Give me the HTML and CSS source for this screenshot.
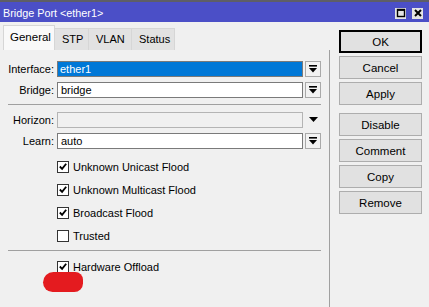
FILE: index.html
```html
<!DOCTYPE html>
<html lang="en">
<head>
    <meta charset="UTF-8">
    <title>Bridge Port &lt;ether1&gt;</title>
    <link rel="stylesheet" href="styles.css">
</head>
<body>
    <div class="window">
        <div class="titlebar">
            <span class="title">Bridge Port &lt;ether1&gt;</span>
            <div class="title-btns">
                <span class="tbtn">
                    <svg width="10" height="10" viewBox="0 0 10 10"><rect x="1.5" y="1.5" width="7" height="7" fill="none" stroke="#000" stroke-width="1.4"/><line x1="1.5" y1="2.2" x2="8.5" y2="2.2" stroke="#000" stroke-width="1.4"/></svg>
                </span>
                <span class="tbtn">
                    <svg width="10" height="10" viewBox="0 0 10 10"><path d="M2 2 L8 8 M8 2 L2 8" stroke="#000" stroke-width="2"/></svg>
                </span>
            </div>
        </div>

        <div class="main">
            <div class="left">
                <div class="tabs">
                    <div class="tab active">General</div>
                    <div class="tab">STP</div>
                    <div class="tab">VLAN</div>
                    <div class="tab">Status</div>
                </div>

                <div class="pane">
                    <div class="row">
                        <label>Interface:</label>
                        <div class="field selected"><span>ether1</span></div>
                        <span class="drop"><svg width="8" height="8" viewBox="0 0 8 8"><rect x="0" y="0" width="8" height="1.6" fill="#000"/><polygon points="0,3 8,3 4,7.5" fill="#000"/></svg></span>
                    </div>
                    <div class="row">
                        <label>Bridge:</label>
                        <div class="field">bridge</div>
                        <span class="drop"><svg width="8" height="8" viewBox="0 0 8 8"><rect x="0" y="0" width="8" height="1.6" fill="#000"/><polygon points="0,3 8,3 4,7.5" fill="#000"/></svg></span>
                    </div>

                    <div class="sep first"></div>

                    <div class="row">
                        <label>Horizon:</label>
                        <div class="field disabled"></div>
                        <span class="arrow"><svg width="9" height="6" viewBox="0 0 9 6"><polygon points="0,0 9,0 4.5,5" fill="#000"/></svg></span>
                    </div>
                    <div class="row">
                        <label>Learn:</label>
                        <div class="field">auto</div>
                        <span class="drop"><svg width="8" height="8" viewBox="0 0 8 8"><rect x="0" y="0" width="8" height="1.6" fill="#000"/><polygon points="0,3 8,3 4,7.5" fill="#000"/></svg></span>
                    </div>

                    <div class="checks">
                        <div class="check"><span class="box on"><svg width="11" height="11" viewBox="0 0 11 11"><path d="M2 5.5 L4.5 8 L9 2.5" fill="none" stroke="#000" stroke-width="2"/></svg></span>Unknown Unicast Flood</div>
                        <div class="check"><span class="box on"><svg width="11" height="11" viewBox="0 0 11 11"><path d="M2 5.5 L4.5 8 L9 2.5" fill="none" stroke="#000" stroke-width="2"/></svg></span>Unknown Multicast Flood</div>
                        <div class="check"><span class="box on"><svg width="11" height="11" viewBox="0 0 11 11"><path d="M2 5.5 L4.5 8 L9 2.5" fill="none" stroke="#000" stroke-width="2"/></svg></span>Broadcast Flood</div>
                        <div class="check"><span class="box"></span>Trusted</div>
                    </div>

                    <div class="sep second"></div>

                    <div class="checks">
                        <div class="check"><span class="box on"><svg width="11" height="11" viewBox="0 0 11 11"><path d="M2 5.5 L4.5 8 L9 2.5" fill="none" stroke="#000" stroke-width="2"/></svg></span>Hardware Offload</div>
                    </div>
                </div>
            </div>

            <div class="actions">
                <button class="btn default">OK</button>
                <button class="btn">Cancel</button>
                <button class="btn">Apply</button>
                <button class="btn group">Disable</button>
                <button class="btn">Comment</button>
                <button class="btn">Copy</button>
                <button class="btn">Remove</button>
            </div>
        </div>

        <div class="scribble"></div>
    </div>
</body>
</html>
```

FILE: styles.css
```css
:root {
    --title-blue: #4b4fc7;
    --window-bg: #f0f0f0;
    --border: #a0a0a0;
    --button-bg: #e1e1e1;
    --button-border: #adadad;
}

body {
    margin: 0;
    padding: 0;
    font-family: "Liberation Sans", Arial, sans-serif;
    font-size: 11px;
    color: #000;
    background-color: var(--window-bg);
}

.window {
    position: relative;
    height: 307px;
    overflow: hidden;
}

.titlebar {
    display: flex;
    align-items: center;
    justify-content: space-between;
    height: 20px;
    border-top: 2px solid #5e5e66;
    background-color: var(--title-blue);
    color: #fff;
    padding: 0 6px 0 3px;
}

.title {
    font-size: 10.8px;
    padding-top: 1px;
}

.title-btns {
    display: flex;
    gap: 6px;
    padding-top: 2px;
}

.tbtn {
    display: flex;
    align-items: center;
    justify-content: center;
    width: 11px;
    height: 11px;
    background-color: #e4e4e4;
}

.main {
    display: flex;
    height: 285px;
}

.left {
    display: flex;
    flex-direction: column;
    width: 330px;
}

.tabs {
    display: flex;
    align-items: flex-end;
    height: 28px;
    padding-left: 3px;
}

.tab {
    box-sizing: border-box;
    height: 22px;
    line-height: 21px;
    padding: 0 7px;
    background-color: #e2e2e2;
    border: 1px solid #d6d6d6;
    border-bottom: none;
    margin-left: -1px;
}

.tab:first-child {
    margin-left: 0;
}

.tab.active {
    height: 25px;
    line-height: 23px;
    width: 52px;
    padding: 0 0 0 6px;
    background-color: #f9f9f9;
    font-size: 11.5px;
}

.tab:nth-child(2) { width: 35px; }
.tab:nth-child(3) { width: 44px; }
.tab:nth-child(4) { width: 44px; }

.pane {
    flex: 1;
    padding: 11px 8px 0 8px;
    border-right: 1px solid var(--border);
}

.row {
    display: flex;
    align-items: center;
    height: 16px;
    margin-bottom: 5px;
}

.row + .row {
    margin-bottom: 6px;
}

.row label {
    width: 46px;
    text-align: right;
    margin-right: 3px;
    white-space: nowrap;
}

.field {
    box-sizing: border-box;
    flex: 1;
    height: 16px;
    line-height: 14px;
    padding: 0 3px;
    background-color: #fff;
    border: 1px solid #7a7a7a;
}

.field.selected {
    padding: 0 2px;
    background-color: #0078d7;
    color: #fff;
}

.field.disabled {
    background-color: #f0f0f0;
    border-color: #b4b4b4;
}

.drop {
    box-sizing: border-box;
    display: flex;
    align-items: center;
    justify-content: center;
    width: 16px;
    height: 16px;
    margin-left: 2px;
    background-color: #f2f2f2;
    border: 1px solid #a9a9a9;
}

.arrow {
    display: flex;
    align-items: center;
    justify-content: center;
    width: 16px;
    height: 16px;
    margin-left: 2px;
}

.sep {
    height: 1px;
    background-color: var(--border);
}

.sep.first {
    margin: 2px 0 7px 0;
}

.sep.second {
    margin: 3px 0 4px 0;
}

.checks {
    padding-left: 49px;
}

.check {
    display: flex;
    align-items: center;
    height: 23px;
}

.row + .checks {
    margin-top: 1px;
}

.box {
    box-sizing: border-box;
    display: flex;
    align-items: center;
    justify-content: center;
    width: 12px;
    height: 12px;
    margin-right: 4px;
    background-color: #fff;
    border: 1px solid #333;
}

.actions {
    display: flex;
    flex-direction: column;
    gap: 3px;
    padding: 8px 0 0 9px;
}

.btn {
    box-sizing: border-box;
    width: 83px;
    height: 23px;
    padding: 0;
    font-family: inherit;
    font-size: 11.5px;
    color: #000;
    background-color: var(--button-bg);
    border: 1px solid var(--button-border);
}

.btn.default {
    border: 2px solid #000;
}

.btn.group {
    margin-top: 5px;
}

.scribble {
    position: absolute;
    left: 43px;
    top: 272px;
    width: 40px;
    height: 20px;
    border-radius: 12px 9px 10px 11px;
    background-color: #e41b1f;
}
```
